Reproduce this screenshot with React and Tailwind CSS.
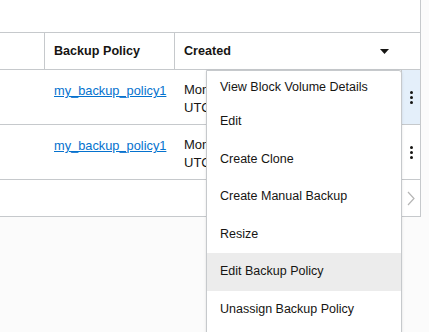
import React from 'react';

const menuItems = [
  'View Block Volume Details',
  'Edit',
  'Create Clone',
  'Create Manual Backup',
  'Resize',
  'Edit Backup Policy',
  'Unassign Backup Policy',
];

const Dots = () => (
  <div className="flex flex-col items-center gap-[2px]">
    <span className="w-[3px] h-[3px] rounded-full bg-[#161513]" />
    <span className="w-[3px] h-[3px] rounded-full bg-[#161513]" />
    <span className="w-[3px] h-[3px] rounded-full bg-[#161513]" />
  </div>
);

const Row = ({ active }) => (
  <div className="flex h-[55px] border-b border-[#c6c9cc]">
    <div className="w-[54px]" />
    <div className="w-[130px] pt-[11px]">
      <a href="#" className="text-[#0572ce] underline leading-[18px] text-[12.8px]">my_backup_policy1</a>
    </div>
    <div className="flex-1 pt-[11px] leading-[18px]">
      <div>Mon</div>
      <div>UTC</div>
    </div>
    <div className={`w-[19px] border-l border-[#c6c9cc] flex items-center justify-center ${active ? 'bg-[#e4effa]' : ''}`}>
      <Dots />
    </div>
  </div>
);

export default function App() {
  return (
    <div className="relative w-[429px] h-[332px] overflow-hidden bg-[#fbfbfb] text-[13px] text-[#161513]" style={{ fontFamily: '"Liberation Sans", Arial, sans-serif' }}>
      <div className="w-[421px] bg-white border-r border-[#c6c9cc]">
        <div className="h-[32px]" />

        <div className="flex h-[38px] border-y border-[#c6c9cc] font-bold text-[12.6px]">
          <div className="w-[45px] border-r border-[#c6c9cc]" />
          <div className="w-[130px] border-r border-[#c6c9cc] pl-[9px] flex items-center">Backup Policy</div>
          <div className="flex-1 pl-[9px] pr-[31px] flex items-center justify-between">
            <span>Created</span>
            <svg width="9" height="5" viewBox="0 0 9 5"><path d="M0 0h9L4.5 5z" fill="#161513" /></svg>
          </div>
        </div>

        <Row active />
        <Row />

        <div className="flex h-[37px] border-b border-[#c6c9cc]">
          <div className="flex-1" />
          <div className="w-[19px] border-l border-[#c6c9cc] flex items-center justify-center">
            <svg width="8" height="15" viewBox="0 0 8 15"><path d="M1 1l6 6.5L1 14" fill="none" stroke="#b5b5b5" strokeWidth="1.2" /></svg>
          </div>
        </div>
      </div>

      <div className="absolute left-[206px] top-[70px] w-[196px] h-[280px] bg-white border border-[#c6c9cc] rounded-tr-[3px] shadow-sm text-[12.5px]">
        {menuItems.map((item, i) => (
          <div
            key={item}
            className={`pl-[13px] flex items-center ${i === 0 ? 'h-[32px] pt-[1px]' : 'h-[37.5px]'} ${item === 'Edit Backup Policy' ? 'bg-[#ececec]' : ''}`}
          >
            {item}
          </div>
        ))}
      </div>
    </div>
  );
}
